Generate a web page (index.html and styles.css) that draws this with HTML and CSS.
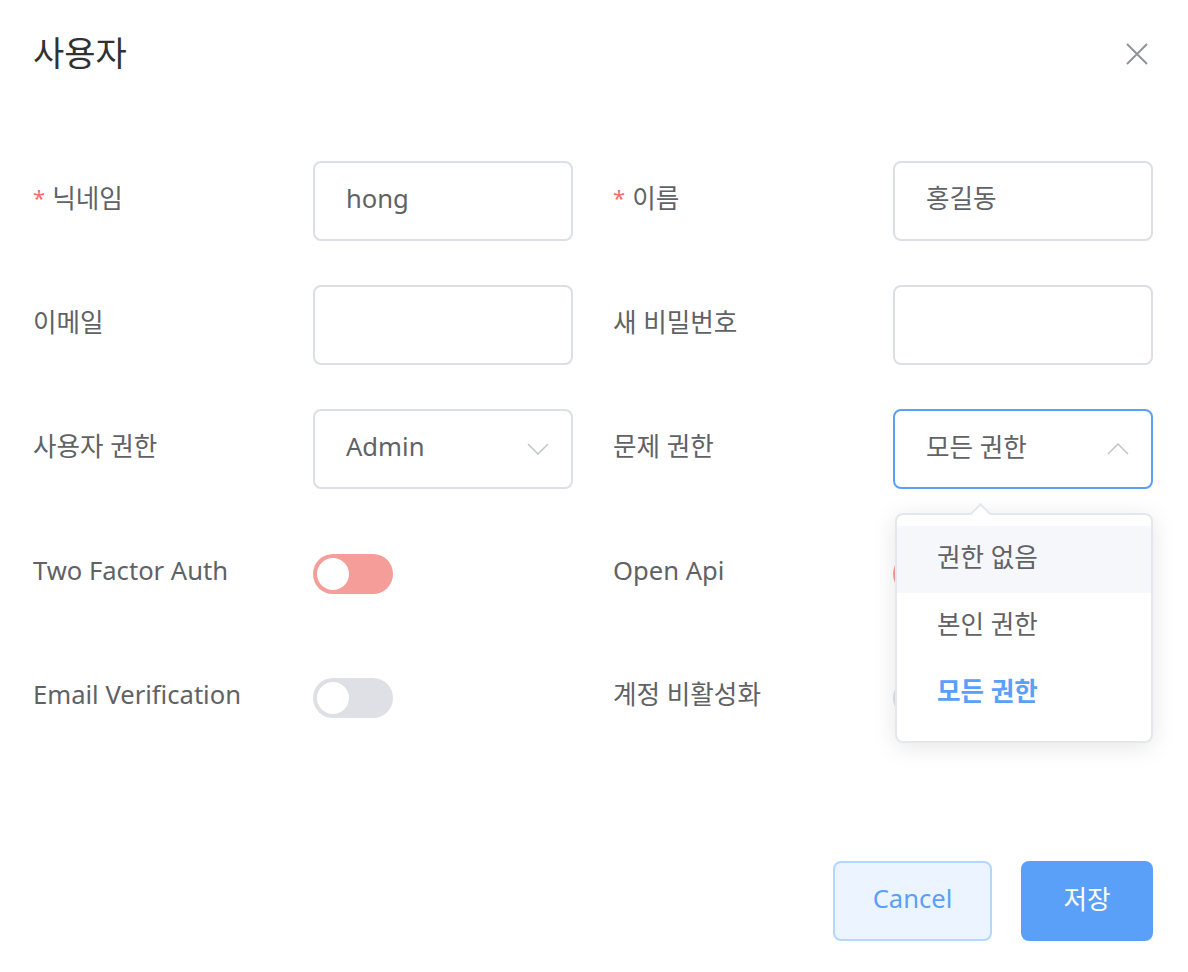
FILE: index.html
```html
<!DOCTYPE html>
<html lang="ko">
<head>
<meta charset="utf-8">
<title>사용자</title>
<link rel="stylesheet" href="styles.css">
</head>
<body>
<div class="dialog">
  <div class="dialog-header">
    <span class="dialog-title">사용자</span>
    <button class="close-btn" aria-label="close">
      <svg width="22" height="22" viewBox="0 0 22 22"><path d="M1 1 L21 21 M21 1 L1 21" stroke="#909399" stroke-width="2" fill="none"/></svg>
    </button>
  </div>
  <form class="form">
    <div class="form-item">
      <label class="form-label"><span class="req">*</span>닉네임</label>
      <div class="control"><div class="input">hong</div></div>
    </div>
    <div class="form-item">
      <label class="form-label"><span class="req">*</span>이름</label>
      <div class="control"><div class="input">홍길동</div></div>
    </div>
    <div class="form-item">
      <label class="form-label">이메일</label>
      <div class="control"><div class="input"></div></div>
    </div>
    <div class="form-item">
      <label class="form-label">새 비밀번호</label>
      <div class="control"><div class="input"></div></div>
    </div>
    <div class="form-item">
      <label class="form-label">사용자 권한</label>
      <div class="control">
        <div class="input select"><span>Admin</span>
          <svg class="chev" width="22" height="12" viewBox="0 0 22 12"><path d="M1 1 L11 11 L21 1" stroke="#c0c4cc" stroke-width="1.5" fill="none"/></svg>
        </div>
      </div>
    </div>
    <div class="form-item">
      <label class="form-label">문제 권한</label>
      <div class="control popper-host">
        <div class="input select focused"><span>모든 권한</span>
          <svg class="chev" width="22" height="12" viewBox="0 0 22 12"><path d="M1 11 L11 1 L21 11" stroke="#c0c4cc" stroke-width="1.5" fill="none"/></svg>
        </div>
        <div class="dropdown">
          <div class="dropdown-arrow"></div>
          <ul class="dropdown-list">
            <li class="dropdown-item hover">권한 없음</li>
            <li class="dropdown-item">본인 권한</li>
            <li class="dropdown-item selected">모든 권한</li>
          </ul>
        </div>
      </div>
    </div>
    <div class="form-item">
      <label class="form-label">Two Factor Auth</label>
      <div class="control"><span class="switch switch-red"><span class="knob"></span></span></div>
    </div>
    <div class="form-item">
      <label class="form-label">Open Api</label>
      <div class="control"><span class="switch switch-red"><span class="knob"></span></span></div>
    </div>
    <div class="form-item">
      <label class="form-label">Email Verification</label>
      <div class="control"><span class="switch"><span class="knob"></span></span></div>
    </div>
    <div class="form-item">
      <label class="form-label">계정 비활성화</label>
      <div class="control"><span class="switch"><span class="knob"></span></span></div>
    </div>
  </form>
  <div class="dialog-footer">
    <button class="btn btn-plain">Cancel</button>
    <button class="btn btn-primary">저장</button>
  </div>
</div>
</body>
</html>
```
FILE: styles.css
```css
* { box-sizing: border-box; }
html, body { margin: 0; padding: 0; background: #fff; }
body {
  font-family: "Noto Sans", "Noto Sans CJK KR", sans-serif;
  color: #606266;
}
.dialog {
  width: 1188px;
  height: 972px;
  padding: 0 35px 0 33px;
}
.dialog-header {
  display: flex;
  justify-content: space-between;
  align-items: center;
  padding-top: 31px;
  height: 75px;
}
.dialog-title {
  font-size: 34px;
  line-height: 44px;
  color: #303133;
}
.close-btn {
  border: 0;
  background: none;
  padding: 0;
  margin-right: 5px;
  margin-top: 2px;
  display: flex;
  cursor: pointer;
}
.form {
  margin: 86px 0 0 0;
  display: grid;
  grid-template-columns: 540px 540px;
  column-gap: 40px;
  row-gap: 44px;
}
.form-item {
  display: flex;
  align-items: center;
  height: 80px;
}
.form-label {
  width: 280px;
  font-size: 25.6px;
  line-height: 40px;
  color: #606266;
  margin-top: -4px;
}
.req {
  color: #f56c6c;
  margin-right: 7px;
  font-size: 22px;
  position: relative;
  top: -2px;
}
.control {
  width: 260px;
  height: 80px;
  display: flex;
  align-items: center;
}
.popper-host { position: relative; }
.input {
  width: 260px;
  height: 80px;
  border: 2px solid #dcdfe6;
  border-radius: 8px;
  padding: 0 30px 6px 31px;
  font-size: 25.6px;
  line-height: 72px;
  color: #606266;
}
.select {
  display: flex;
  justify-content: space-between;
  align-items: center;
  padding-right: 22px;
  line-height: normal;
}
.select .chev { margin-top: 6px; }
.focused { border-color: #5aa0f9; }
.dropdown {
  position: absolute;
  top: 104px;
  left: 2px;
  width: 258px;
  background: #fff;
  border: 2px solid #e4e7ed;
  border-radius: 8px;
  box-shadow: 0 4px 24px rgba(0, 0, 0, 0.1);
  z-index: 10;
}
.dropdown-arrow {
  position: absolute;
  top: -9px;
  left: 76px;
  width: 15px;
  height: 15px;
  background: #fff;
  border-top: 2px solid #e4e7ed;
  border-left: 2px solid #e4e7ed;
  transform: rotate(45deg);
}
.dropdown-list {
  list-style: none;
  margin: 0;
  padding: 11px 0 14px;
  position: relative;
}
.dropdown-item {
  height: 67px;
  line-height: 64px;
  padding: 0 40px;
  font-size: 25.6px;
  color: #606266;
}
.dropdown-item.hover { background: #f5f7fa; }
.dropdown-item.selected { color: #5aa0f9; font-weight: 700; }
.switch {
  position: relative;
  display: inline-block;
  width: 80px;
  height: 40px;
  border-radius: 20px;
  background: #dfe0e6;
  margin-top: 2px;
}
.switch-red { background: #f59e99; }
.knob {
  position: absolute;
  top: 4px;
  left: 4px;
  width: 32px;
  height: 32px;
  border-radius: 50%;
  background: #fff;
}
.dialog-footer {
  display: flex;
  justify-content: flex-end;
  gap: 29px;
  margin-top: 124px;
}
.btn {
  height: 80px;
  border-radius: 8px;
  font-family: "Noto Sans", "Noto Sans CJK KR", sans-serif;
  font-size: 25.6px;
  padding: 0 0 6px;
  cursor: pointer;
}
.btn-plain {
  width: 159px;
  background: #ecf5ff;
  border: 2px solid #b3d8ff;
  color: #5aa0f9;
}
.btn-primary {
  width: 132px;
  background: #5aa0f9;
  border: 2px solid #5aa0f9;
  color: #fff;
}
```
